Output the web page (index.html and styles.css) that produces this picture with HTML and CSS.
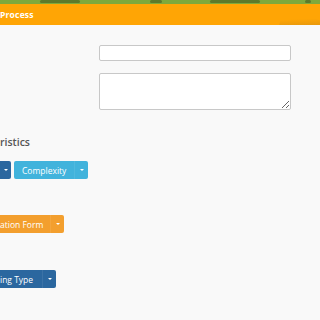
FILE: index.html
```html
<!DOCTYPE html>
<html>
<head>
<meta charset="utf-8">
<link rel="stylesheet" href="styles.css">
</head>
<body>
<div class="topstrip"><span class="blob b1"></span><span class="blob b2"></span><span class="blob b3"></span><span class="blob b4"></span></div>
<div class="header"><span class="title">Process</span><span class="fold"></span></div>
<div class="content">
  <div class="form">
    <input class="field" type="text">
    <textarea class="area"></textarea>
  </div>
  <div class="heading">ristics</div>
  <div class="btnrow row1">
    <div class="split navy">
      <span class="caret-part first"><span class="caret"></span></span>
    </div>
    <div class="split cyan">
      <span class="label">Complexity</span>
      <span class="caret-part"><span class="caret"></span></span>
    </div>
  </div>
  <div class="btnrow row2">
    <div class="split orange">
      <span class="label cut">ation Form</span>
      <span class="caret-part"><span class="caret"></span></span>
    </div>
  </div>
  <div class="btnrow row3">
    <div class="split navy">
      <span class="label cut wide">ing Type</span>
      <span class="caret-part"><span class="caret"></span></span>
    </div>
  </div>
</div>
</body>
</html>
```
FILE: styles.css
```css
html, body {
  margin: 0;
  padding: 0;
  width: 320px;
  height: 320px;
  overflow: hidden;
  background: #f9f9f9;
  font-family: "Open Sans", "Liberation Sans", sans-serif;
}
.topstrip {
  height: 4px;
  background: #7ea93c;
  position: relative;
  overflow: hidden;
}
.blob {
  position: absolute;
  top: 0;
  height: 3px;
  background: #5c7a2c;
  border-radius: 2px;
}
.b1 { left: 40px; width: 40px; }
.b2 { left: 150px; width: 12px; }
.b3 { left: 210px; width: 50px; }
.b4 { left: 305px; width: 6px; }
.header {
  height: 21px;
  background: #ffa505;
  display: flex;
  align-items: center;
  position: relative;
  overflow: hidden;
}
.title {
  color: #fff;
  font-weight: 700;
  font-size: 8.5px;
  letter-spacing: 0.2px;
}
.fold {
  position: absolute;
  right: -10px;
  top: 12px;
  width: 50px;
  height: 20px;
  background: linear-gradient(160deg, rgba(0,0,0,0) 30%, rgba(150,110,40,0.35) 60%, rgba(0,0,0,0) 80%);
  transform: rotate(18deg);
}
.content {
  padding-top: 20px;
}
.form {
  margin-left: 99px;
  width: 192px;
  display: flex;
  flex-direction: column;
  gap: 12px;
}
.field, .area {
  box-sizing: border-box;
  width: 192px;
  margin: 0;
  border: 1px solid #c8c8c8;
  border-radius: 2px;
  background: #fff;
  padding: 0;
  outline: none;
}
.field { height: 16px; }
.area { height: 37px; resize: vertical; display: block; }
.heading {
  margin-top: 25px;
  font-family: "Open Sans", "Liberation Sans", sans-serif;
  font-size: 10.5px;
  font-weight: 600;
  color: #555;
  line-height: 15px;
  letter-spacing: 0;
}
.btnrow {
  display: flex;
  gap: 3px;
}
.row1 { margin-top: 11px; }
.row2 { margin-top: 36px; }
.row3 { margin-top: 37px; }
.split {
  display: flex;
  height: 18px;
  border-radius: 2px;
  color: #fff;
  font-size: 8.5px;
  font-weight: 400;
  align-items: stretch;
}
.split.navy { background: #2b679f; border-radius: 0 2px 2px 0; }
.split.cyan { background: #41b3dc; }
.split.orange { background: #f39f2e; border-radius: 0 2px 2px 0; }
.label {
  display: flex;
  align-items: center;
  padding: 0 8px;
}
.label.cut { padding-left: 0; padding-right: 7px; }
.label.cut.wide { padding-right: 9px; }
.caret-part {
  display: flex;
  align-items: center;
  justify-content: center;
  width: 13px;
  border-left: 1px solid rgba(255,255,255,0.08);
}
.caret-part.first { width: 11px; border-left: none; }
.caret {
  width: 0;
  height: 0;
  border-left: 2px solid transparent;
  border-right: 2px solid transparent;
  border-top: 2px solid #fff;
}
```
